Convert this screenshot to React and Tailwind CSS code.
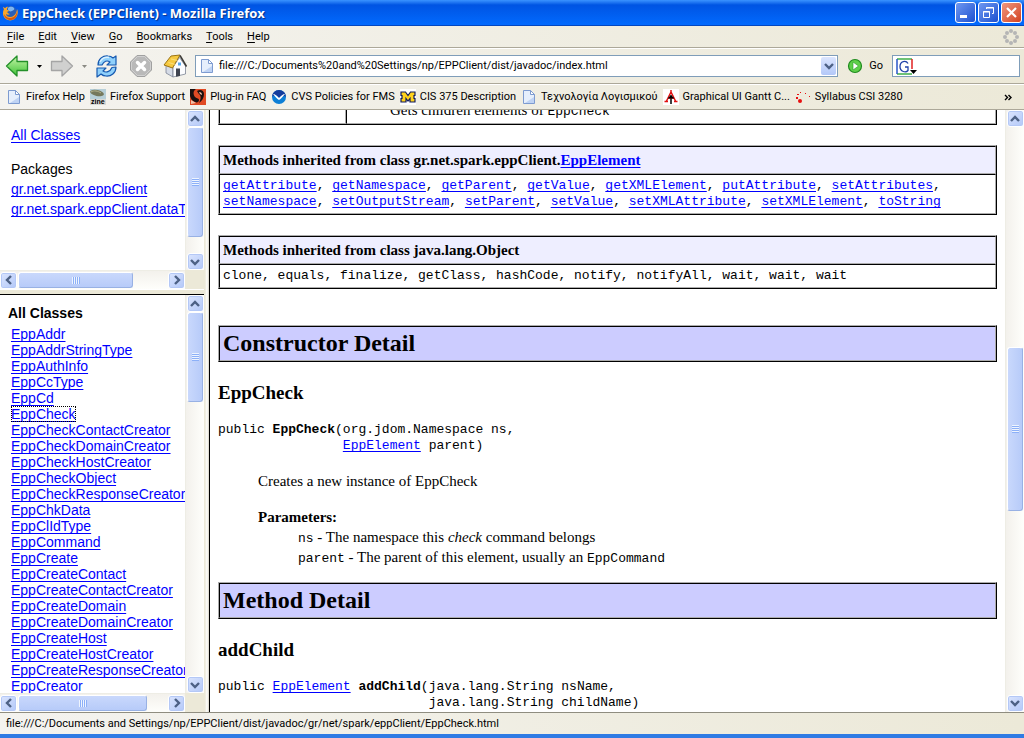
import React from "react";

const menus = ["File", "Edit", "View", "Go", "Bookmarks", "Tools", "Help"];

const classes = [
  "EppAddr",
  "EppAddrStringType",
  "EppAuthInfo",
  "EppCcType",
  "EppCd",
  "EppCheck",
  "EppCheckContactCreator",
  "EppCheckDomainCreator",
  "EppCheckHostCreator",
  "EppCheckObject",
  "EppCheckResponseCreator",
  "EppChkData",
  "EppClIdType",
  "EppCommand",
  "EppCreate",
  "EppCreateContact",
  "EppCreateContactCreator",
  "EppCreateDomain",
  "EppCreateDomainCreator",
  "EppCreateHost",
  "EppCreateHostCreator",
  "EppCreateResponseCreator",
  "EppCreator",
];

const inheritedRows = [
  ["getAttribute", "getNamespace", "getParent", "getValue", "getXMLElement", "putAttribute", "setAttributes"],
  ["setNamespace", "setOutputStream", "setParent", "setValue", "setXMLAttribute", "setXMLElement", "toString"],
];

/* ---------- Icons ---------- */

const FirefoxIcon = () => (
  <svg viewBox="0 0 16 16" className="h-4 w-4 shrink-0">
    <circle cx="8.5" cy="7.5" r="6.5" fill="#2a5fb8" />
    <path d="M6 3c2-2 5-1 6 0 1 2-1 2-2 3-2 1-3 0-4-1z" fill="#7fb6f0" />
    <path
      d="M1 2c0 1 1 2 1 2C0 8 1 12 4 14c4 3 9 1 11-3 1-3 1-5 0-7 0 2-1 3-1 4-1 2-3 4-6 4-2 0-4-1-4-3 1 1 3 1 4 0-1 0-2-1-3-2l2-1c0-1-1-1-2-1 0-1 0-2 1-3C4 1 4 3 3 3 2 3 2 2 1 2z"
      fill="#f9a62b"
    />
    <path d="M15 5c0 4-2 8-7 8-3 0-5-2-6-4 0 4 4 6 7 6 4 0 7-4 6-10z" fill="#d9560f" />
  </svg>
);

const ArrowIcon = ({ forward }) => (
  <svg viewBox="0 0 24 24" className={forward ? "h-6 w-6 rotate-180" : "h-6 w-6"}>
    <defs>
      <linearGradient id="backGreen" x1="0" y1="0" x2="0" y2="1">
        <stop offset="0" stopColor="#c5f5a8" />
        <stop offset="1" stopColor="#3fc236" />
      </linearGradient>
    </defs>
    <path
      d="M1.5 12 12 2v5.500h10.500v9H12V22z"
      fill={forward ? "#d0d0cf" : "url(#backGreen)"}
      stroke={forward ? "#a5a5a5" : "#24902a"}
      strokeWidth="1.300"
      strokeLinejoin="round"
    />
  </svg>
);

const ReloadIcon = () => (
  <svg viewBox="0 0 24 24" className="h-6 w-6">
    <g fill="#8fd0fb" stroke="#1659b0" strokeWidth="1.200" strokeLinejoin="round">
      <path d="M3 11C3 5 8 1.500 13 2c2 0 4 1 5 2l3-2v9h-9l3-3c-3-2-6-1-8 3z" />
      <path d="M21 13c0 6-5 9.500-10 9-2 0-4-1-5-2l-4 3v-9h9l-3 3c3 2 7 1 9-3.500z" />
    </g>
    <path d="M5 8c2-4 6-5 9-4.500" fill="none" stroke="#d9f1ff" strokeWidth="1.500" />
  </svg>
);

const StopIcon = () => (
  <svg viewBox="0 0 24 24" className="h-6 w-6">
    <path d="M8 1.500h8L22.500 8v8L16 22.500H8L1.500 16V8z" fill="#b9b9b9" stroke="#a0a0a0" strokeLinejoin="round" />
    <path d="M8.500 2.500h7l6 6v7l-6 6h-7l-6-6v-7z" fill="none" stroke="#d6d6d6" strokeWidth=".8" />
    <path d="m8.500 8.500 7 7m0-7-7 7" stroke="#fff" strokeWidth="3.500" strokeLinecap="round" />
  </svg>
);

const HomeIcon = () => (
  <svg viewBox="0 0 24 24" className="h-6 w-6">
    <path d="m3 11 7 3v9l-7-4z" fill="#d5dbe6" stroke="#7b8494" strokeWidth=".8" />
    <path d="M10 13 16.500 3.500 22.500 12v8L10 23z" fill="#fbfcfe" stroke="#7b8494" strokeWidth=".8" />
    <path d="M13 14.500h4V22l-4 .8z" fill="#3f4450" />
    <path d="M15 8.500h3v3h-3z" fill="#5aa9ec" />
    <path d="M1 11 8 2l9-1L9.500 14z" fill="#f6c93f" stroke="#9b7414" strokeLinejoin="round" />
    <path d="m17 1.500 6.500 11" stroke="#3b3a36" strokeWidth="1.500" />
    <path d="m5.500 8.500 7 2M8 5l6.500 1.500" stroke="#fbe48c" strokeWidth=".8" />
  </svg>
);

const PageIcon = () => (
  <svg viewBox="0 0 16 16" className="h-4 w-4 shrink-0">
    <path d="M2.500 1.500h7l4 4v9h-11z" fill="#e6effc" stroke="#7d9bd0" />
    <path d="M9.500 1.500v4h4z" fill="#fff" stroke="#7d9bd0" />
    <path d="M4 14h9V8z" fill="#bfd3f4" />
  </svg>
);

const ZineIcon = () => (
  <svg viewBox="0 0 16 16" className="h-4 w-4 shrink-0">
    <path d="M0 0h16v11H0z" fill="#b7cfd8" />
    <path d="M0 10h16v6H0z" fill="#d9d9d5" />
    <ellipse cx="7" cy="4" rx="7" ry="3" fill="#75785c" transform="rotate(12 7 4)" />
    <path d="M1 3c3-2 7-1 10 1" stroke="#b6b48e" fill="none" />
    <text x="1" y="15" fontSize="7" fontWeight="bold" fontFamily="Liberation Sans, sans-serif">
      zine
    </text>
  </svg>
);

const PluginIcon = () => (
  <svg viewBox="0 0 16 16" className="h-4 w-4 shrink-0">
    <path d="M0 0h16v16H0z" fill="#e04a24" />
    <path d="M0 0h6C3 2 3 5 5 8c2 2 4 1 4 3 0 2-2 3-4 2-3-1-4-3-5-6z" fill="#1a1010" />
    <path d="M7 2c3-2 7-1 7 3 0 4-2 7-5 9 2-4 2-6 1-8-1-1-2-2-3-4z" fill="#1a1010" />
    <path d="M9 3c2 0 3 1 3 3l-2-1zM1 11l5 3-5 1z" fill="#f0c0a8" />
  </svg>
);

const NoaaIcon = () => (
  <svg viewBox="0 0 16 16" className="h-4 w-4 shrink-0">
    <circle cx="8" cy="8" r="7" fill="#0d7fd6" />
    <path d="M1 8a7 7 0 0 1 14 0c-2-2-3-1-6 2C6 6 4 5 1 8z" fill="#143c9c" />
    <path d="M2 5c2 0 4 2 6 4 2-2 4-4 6-4-2 2-4 5-6 6C6 10 4 7 2 5z" fill="#fff" />
  </svg>
);

const MichiganIcon = () => (
  <svg viewBox="0 0 16 16" className="h-4 w-4 shrink-0">
    <path d="M0 0h16v16H0z" fill="#fff" />
    <path
      d="M1 3h4.500L8 6.500 10.500 3H15v3.500h-1v3h1V13h-5V9.500L8 12 6 9.500V13H1V9.500h1v-3H1z"
      fill="#ffd21c"
      stroke="#101a5c"
      strokeWidth="1.200"
    />
  </svg>
);

const TowerIcon = () => (
  <svg viewBox="0 0 16 16" className="h-4 w-4 shrink-0">
    <path d="M0 0h16v16H0z" fill="#fff" />
    <path d="M8 1v3M8 3 3.500 12M8 3l4.500 9M5 9h6M1.500 12.500H5M11 12.500h3.500" stroke="#e01010" strokeWidth="1.500" fill="none" />
    <path d="M8 6v9M5.500 9.500 8 7l2.500 2.500" stroke="#000" strokeWidth="1.500" fill="none" />
  </svg>
);

const DotsIcon = () => (
  <svg viewBox="0 0 16 16" className="h-4 w-4 shrink-0">
    <g fill="#e81010">
      <circle cx="5" cy="12" r="2" />
      <path d="M1 8h2v2H1zM2 5h2v1H2zM5 3h1v1H5zM10 4h1v1h-1zM14 7h1v1h-1z" />
    </g>
  </svg>
);

const Throbber = () => (
  <svg viewBox="0 0 18 18" className="h-[18px] w-[18px]">
    <g fill="#b5b5b5">
      <circle cx="9" cy="3" r="2" />
      <circle cx="13" cy="5" r="2" />
      <circle cx="15" cy="9" r="2" />
      <circle cx="13" cy="13" r="2" />
      <circle cx="9" cy="15" r="2" />
      <circle cx="5" cy="13" r="2" />
      <circle cx="3" cy="9" r="2" />
      <circle cx="5" cy="5" r="2" />
    </g>
  </svg>
);

const Caret = ({ className }) => (
  <svg viewBox="0 0 5 3" className={`h-[3px] w-[5px] ${className}`}>
    <path d="M0 0h5L2.500 3z" fill="currentColor" />
  </svg>
);

const Chevron = ({ dir }) => {
  const paths = {
    up: "M1 7 5 3l4 4",
    down: "m1 3 4 4 4-4",
    left: "M7 1 3 5l4 4",
    right: "m3 1 4 4-4 4",
  };
  return (
    <svg viewBox="0 0 10 10" className="h-[10px] w-[10px]">
      <path d={paths[dir]} fill="none" stroke="#4d6185" strokeWidth="2.400" />
    </svg>
  );
};

const bookmarks = [
  { label: "Firefox Help", Icon: PageIcon },
  { label: "Firefox Support", Icon: ZineIcon },
  { label: "Plug-in FAQ", Icon: PluginIcon },
  { label: "CVS Policies for FMS", Icon: NoaaIcon },
  { label: "CIS 375 Description", Icon: MichiganIcon },
  { label: "Τεχνολογία Λογισμικού", Icon: PageIcon },
  { label: "Graphical UI Gantt C...", Icon: TowerIcon },
  { label: "Syllabus CSI 3280", Icon: DotsIcon },
];

/* ---------- Scrollbars ---------- */

const ScrollButton = ({ dir }) => (
  <button
    aria-label={`Scroll ${dir}`}
    className="flex h-[17px] w-[17px] shrink-0 items-center justify-center rounded-[3px] border border-white bg-linear-to-br from-[#dbe5fe] to-[#b3c8f8] shadow-[inset_0_0_0_1px_#b4c8f6]"
  >
    <Chevron dir={dir} />
  </button>
);

// before / size / after are the relative lengths of the track and its thumb
const VScroll = ({ before, size, after }) => (
  <div className="flex w-[19px] shrink-0 flex-col items-center border-l border-[#eeede5] bg-linear-to-r from-[#f3f1ec] to-[#fefefb]">
    <ScrollButton dir="up" />
    <div style={{ flexGrow: before }} />
    <div
      style={{ flexGrow: size }}
      className="flex w-4 basis-0 flex-col items-center justify-center rounded-[3px] border border-[#98b1e4] border-t-white border-l-white bg-linear-to-r from-[#c9d8fc] to-[#b7cbf9]"
    >
      <span className="h-px w-[7px] bg-[#eef4fe]" />
      <span className="h-px w-[7px] bg-[#8cb0f8]" />
      <span className="h-px w-[7px] bg-[#eef4fe]" />
      <span className="h-px w-[7px] bg-[#8cb0f8]" />
      <span className="h-px w-[7px] bg-[#eef4fe]" />
      <span className="h-px w-[7px] bg-[#8cb0f8]" />
      <span className="h-px w-[7px] bg-[#eef4fe]" />
      <span className="h-px w-[7px] bg-[#8cb0f8]" />
    </div>
    <div style={{ flexGrow: after }} />
    <ScrollButton dir="down" />
  </div>
);

const HScroll = ({ before, size, after }) => (
  <div className="flex h-[19px] shrink-0 bg-[#ece9d8]">
    <div className="flex flex-1 items-center border-t border-[#eeede5] bg-linear-to-b from-[#f3f1ec] to-[#fefefb]">
      <ScrollButton dir="left" />
      <div style={{ flexGrow: before }} />
      <div
        style={{ flexGrow: size }}
        className="flex h-4 basis-0 items-center justify-center rounded-[3px] border border-[#98b1e4] border-t-white border-l-white bg-linear-to-b from-[#c9d8fc] to-[#b7cbf9]"
      >
        <span className="h-[7px] w-px bg-[#eef4fe]" />
        <span className="h-[7px] w-px bg-[#8cb0f8]" />
        <span className="h-[7px] w-px bg-[#eef4fe]" />
        <span className="h-[7px] w-px bg-[#8cb0f8]" />
        <span className="h-[7px] w-px bg-[#eef4fe]" />
        <span className="h-[7px] w-px bg-[#8cb0f8]" />
        <span className="h-[7px] w-px bg-[#eef4fe]" />
        <span className="h-[7px] w-px bg-[#8cb0f8]" />
      </div>
      <div style={{ flexGrow: after }} />
      <ScrollButton dir="right" />
    </div>
    <div className="w-[19px] shrink-0" />
  </div>
);

/* ---------- Document pieces ---------- */

const Link = ({ children, className = "" }) => (
  <a
    href="#"
    className={`text-[#0000ff] underline decoration-1 underline-offset-2 [text-decoration-skip-ink:none] ${className}`}
  >
    {children}
  </a>
);

const Code = ({ children }) => (
  <code className="font-['Liberation_Mono','Courier_New',monospace] text-[13px] leading-none">{children}</code>
);

const table =
  "w-full border-separate border-spacing-0 border border-black border-t-[#acacac] border-l-[#acacac]";
const cell =
  "border border-[#acacac] border-t-black border-l-black p-[3px] text-left align-top";

const Banner = ({ children }) => (
  <table className={table}>
    <tbody>
      <tr>
        <th className={`${cell} bg-[#ccccff]`}>
          <h2 className="text-2xl leading-[27px] font-bold">{children}</h2>
        </th>
      </tr>
    </tbody>
  </table>
);

const Inherited = ({ title, children }) => (
  <table className={`${table} mb-5`}>
    <thead>
      <tr>
        <th className={`${cell} bg-[#eeeeff] font-bold`}>{title}</th>
      </tr>
    </thead>
    <tbody>
      <tr>
        <td className={`${cell} font-['Liberation_Mono','Courier_New',monospace] text-[13px] leading-4`}>
          {children}
        </td>
      </tr>
    </tbody>
  </table>
);

const Signature = ({ children }) => (
  <pre className="mt-[17px] font-['Liberation_Mono','Courier_New',monospace] text-[13px] leading-4">
    {children}
  </pre>
);

/* ---------- Window chrome ---------- */

const TitleBar = () => (
  <header className="flex h-[26px] shrink-0 items-center gap-1 border-b border-[#0347c0] bg-linear-to-b from-[#3a93ff] via-[#0054e3] via-20% to-[#026afe] px-[2px]">
    <FirefoxIcon />
    <h1 className="flex-1 font-['Open_Sans',sans-serif] text-[13px] leading-4 font-bold text-white [text-shadow:1px_1px_1px_#0a2f86]">
      EppCheck (EPPClient) - Mozilla Firefox
    </h1>
    <div className="flex gap-[2px]">
      <button
        aria-label="Minimize"
        className="h-[21px] w-[21px] rounded-[3px] border border-white bg-linear-to-br from-[#6f97f0] to-[#1c4fd0]"
      >
        <svg viewBox="0 0 19 19">
          <path d="M4 12h7v3H4z" fill="#fff" />
        </svg>
      </button>
      <button
        aria-label="Restore"
        className="h-[21px] w-[21px] rounded-[3px] border border-white bg-linear-to-br from-[#6f97f0] to-[#1c4fd0]"
      >
        <svg viewBox="0 0 19 19" fill="none" stroke="#fff">
          <path d="M7.500 6V4.500h7v6H13M7 5h8M4.500 8.500h6v6h-6zM4 9h7" />
        </svg>
      </button>
      <button
        aria-label="Close"
        className="h-[21px] w-[21px] rounded-[3px] border border-white bg-linear-to-br from-[#f0957c] to-[#d2401c]"
      >
        <svg viewBox="0 0 19 19">
          <path d="m5 5 9 9m0-9-9 9" stroke="#fff" strokeWidth="2.200" />
        </svg>
      </button>
    </div>
  </header>
);

const MenuBar = () => (
  <nav className="flex h-[22px] shrink-0 items-center border-b border-[#aca899] pr-1">
    <div className="flex flex-1 gap-[14px] pl-[7px]">
      {menus.map((name) => (
        <button key={name}>
          <span className="underline underline-offset-2">{name[0]}</span>
          {name.slice(1)}
        </button>
      ))}
    </div>
    <Throbber />
  </nav>
);

const Toolbar = () => (
  <div className="flex h-9 shrink-0 items-center border-t border-b border-t-white border-b-[#aca899] pr-1 pl-[5px]">
    <button aria-label="Back">
      <ArrowIcon />
    </button>
    <button aria-label="Back history" className="flex w-[21px] justify-center">
      <Caret className="text-black" />
    </button>
    <button aria-label="Forward">
      <ArrowIcon forward />
    </button>
    <button aria-label="Forward history" className="flex w-[21px] justify-center">
      <Caret className="text-[#8a8a84]" />
    </button>
    <div className="flex gap-[10px]">
      <button aria-label="Reload">
        <ReloadIcon />
      </button>
      <button aria-label="Stop">
        <StopIcon />
      </button>
      <button aria-label="Home">
        <HomeIcon />
      </button>
    </div>
    <div className="ml-2 flex h-[22px] flex-1 items-center gap-1 border border-[#7f9db9] bg-white pr-px pl-[3px]">
      <PageIcon />
      <input
        aria-label="Location"
        className="min-w-0 flex-1 outline-none"
        defaultValue="file:///C:/Documents%20and%20Settings/np/EPPClient/dist/javadoc/index.html"
      />
      <button
        aria-label="Show history"
        className="flex h-[18px] w-[15px] items-center justify-center rounded-[2px] bg-linear-to-b from-[#dbe5fe] to-[#b3c8f8]"
      >
        <Chevron dir="down" />
      </button>
    </div>
    <button className="mx-[9px] flex items-center gap-[6px]">
      <svg viewBox="0 0 16 16" className="h-4 w-4">
        <circle cx="8" cy="8" r="6.500" fill="#5fd04a" stroke="#1f8a1f" strokeWidth="1.200" />
        <path d="M6 4 11.500 8 6 12z" fill="#fff" stroke="#2a9a2a" strokeWidth=".6" />
      </svg>
      Go
    </button>
    <div className="flex h-[22px] w-32 items-center gap-1 border border-[#7f9db9] bg-white px-[3px]">
      <button aria-label="Search engine">
        <svg viewBox="0 0 21 17" className="h-[17px] w-[21px]">
          <path d="M1 1h15M1 16h15" stroke="#3fae49" strokeWidth="1.500" />
          <path d="M1 1v15" stroke="#2a56c8" strokeWidth="1.500" />
          <path d="M16 1v10" stroke="#e02020" strokeWidth="1.500" />
          <path d="M12 5.500C10 2 4 3 4 8.500S10 15 12 12.500V9H9" fill="none" stroke="#2142a8" strokeWidth="1.300" />
          <path d="M14 12h7l-3.500 4z" fill="#000" />
        </svg>
      </button>
      <input aria-label="Search" className="min-w-0 flex-1 outline-none" />
    </div>
  </div>
);

const BookmarksBar = () => (
  <div className="flex h-[26px] shrink-0 items-center border-t border-b border-t-white border-b-[#aca899] pr-3 pl-[6px]">
    <div className="flex flex-1 gap-[5px]">
      {bookmarks.map(({ label, Icon }) => (
        <a key={label} href="#" className="flex items-center gap-1 whitespace-nowrap">
          <Icon />
          {label}
        </a>
      ))}
    </div>
    <button aria-label="More bookmarks">
      <svg viewBox="0 0 8 7" className="h-[7px] w-2">
        <path d="m1 1 2.500 2.500L1 6m3.500-5L7 3.500 4.500 6" fill="none" stroke="#000" strokeWidth="1.400" />
      </svg>
    </button>
  </div>
);

/* ---------- Frames ---------- */

const PackagesFrame = () => (
  <section className="flex h-[179px] shrink-0 flex-col">
    <div className="flex min-h-0 flex-1">
      <div className="flex-1 overflow-hidden pt-[15px] pl-[11px] text-sm leading-5 whitespace-nowrap">
        <Link>All Classes</Link>
        <p className="mt-[14px]">Packages</p>
        <ul>
          <li>
            <Link>gr.net.spark.eppClient</Link>
          </li>
          <li>
            <Link>gr.net.spark.eppClient.dataTypes</Link>
          </li>
        </ul>
      </div>
      <VScroll before={0} size={110} after={16} />
    </div>
    <HScroll before={1} size={115} after={35} />
  </section>
);

const ClassesFrame = () => (
  <section className="flex min-h-0 flex-1 flex-col">
    <div className="flex min-h-0 flex-1">
      <div className="flex-1 overflow-hidden pt-2 pl-2 text-sm whitespace-nowrap">
        <h2 className="leading-5 font-bold">All Classes</h2>
        <ul className="mt-[3px] pl-[3px] leading-4">
          {classes.map((name) => (
            <li key={name}>
              <Link className={name === "EppCheck" ? "outline-1 outline-dotted outline-black -outline-offset-1" : ""}>
                {name}
              </Link>
            </li>
          ))}
        </ul>
      </div>
      <VScroll before={0} size={88} after={276} />
    </div>
    <HScroll before={1} size={129} after={21} />
  </section>
);

const ClassFrame = () => (
  <main className="flex min-w-0 flex-1">
    <div className="min-w-0 flex-1 overflow-hidden px-2 font-['Liberation_Serif','Times_New_Roman',serif] text-[15px] leading-5">
      {/* scrolled so only the end of the method summary shows */}
      <table className={`${table} -mt-[15px] mb-5`}>
        <tbody>
          <tr>
            <td className={`${cell} w-[127px]`}></td>
            <td className={cell}>
              <p className="pl-10">
                Gets children elements of <Code>EppCheck</Code>
              </p>
            </td>
          </tr>
        </tbody>
      </table>

      <Inherited
        title={
          <>
            Methods inherited from class gr.net.spark.eppClient.<Link>EppElement</Link>
          </>
        }
      >
        {inheritedRows.map((row, i) => (
          <p key={i} className="whitespace-nowrap">
            {row.map((name, j) => (
              <React.Fragment key={name}>
                <Link>{name}</Link>
                {i === 1 && j === row.length - 1 ? "" : ", "}
              </React.Fragment>
            ))}
          </p>
        ))}
      </Inherited>

      <Inherited title="Methods inherited from class java.lang.Object">
        clone, equals, finalize, getClass, hashCode, notify, notifyAll, wait, wait, wait
      </Inherited>

      <div className="pt-4">
        <Banner>Constructor Detail</Banner>
      </div>
      <h3 className="mt-[19px] text-[19px] leading-6 font-bold">EppCheck</h3>
      <Signature>
        public <b>EppCheck</b>(org.jdom.Namespace ns,{"\n"}
        {" ".repeat(16)}
        <Link>EppElement</Link> parent)
      </Signature>
      <p className="mt-[17px] pl-10">Creates a new instance of EppCheck</p>
      <dl className="mt-4 mb-[15px] pl-10">
        <dt className="font-bold">Parameters:</dt>
        <dd className="pl-10">
          <Code>ns</Code> - The namespace this <i>check</i> command belongs
        </dd>
        <dd className="pl-10">
          <Code>parent</Code> - The parent of this element, usually an <Code>EppCommand</Code>
        </dd>
      </dl>

      <Banner>Method Detail</Banner>
      <h3 className="mt-[19px] text-[19px] leading-6 font-bold">addChild</h3>
      <Signature>
        public <Link>EppElement</Link> <b>addChild</b>(java.lang.String nsName,{"\n"}
        {" ".repeat(27)}java.lang.String childName)
      </Signature>
    </div>
    <VScroll before={221} size={162} after={185} />
  </main>
);

const App = () => {
  return (
    <div className="flex h-screen flex-col overflow-hidden bg-linear-to-r from-[#f4f3ef] to-[#ece9d8] font-['Roboto','Noto_Sans',sans-serif] text-[11px] leading-4 text-black">
      <TitleBar />
      <MenuBar />
      <Toolbar />
      <BookmarksBar />

      <div className="flex min-h-0 flex-1 bg-white">
        <aside className="flex w-[204px] shrink-0 flex-col font-['Liberation_Sans',Arial,sans-serif]">
          <PackagesFrame />
          <div className="h-[6px] shrink-0 border-t border-b border-t-white border-b-black bg-[#ece9d8]" />
          <ClassesFrame />
        </aside>
        <div className="w-[6px] shrink-0 border-r border-l border-r-black border-l-[#ece9d8] bg-linear-to-r from-[#ece9d8] via-white to-[#d8d4c4]" />
        <ClassFrame />
      </div>

      <footer className="flex h-[22px] shrink-0 items-center border-t border-[#8f8d80] pl-[6px]">
        file:///C:/Documents and Settings/np/EPPClient/dist/javadoc/gr/net/spark/eppClient/EppCheck.html
      </footer>
      <div className="h-1 shrink-0 bg-[#2f7be4]" />
    </div>
  );
};

export default App;
